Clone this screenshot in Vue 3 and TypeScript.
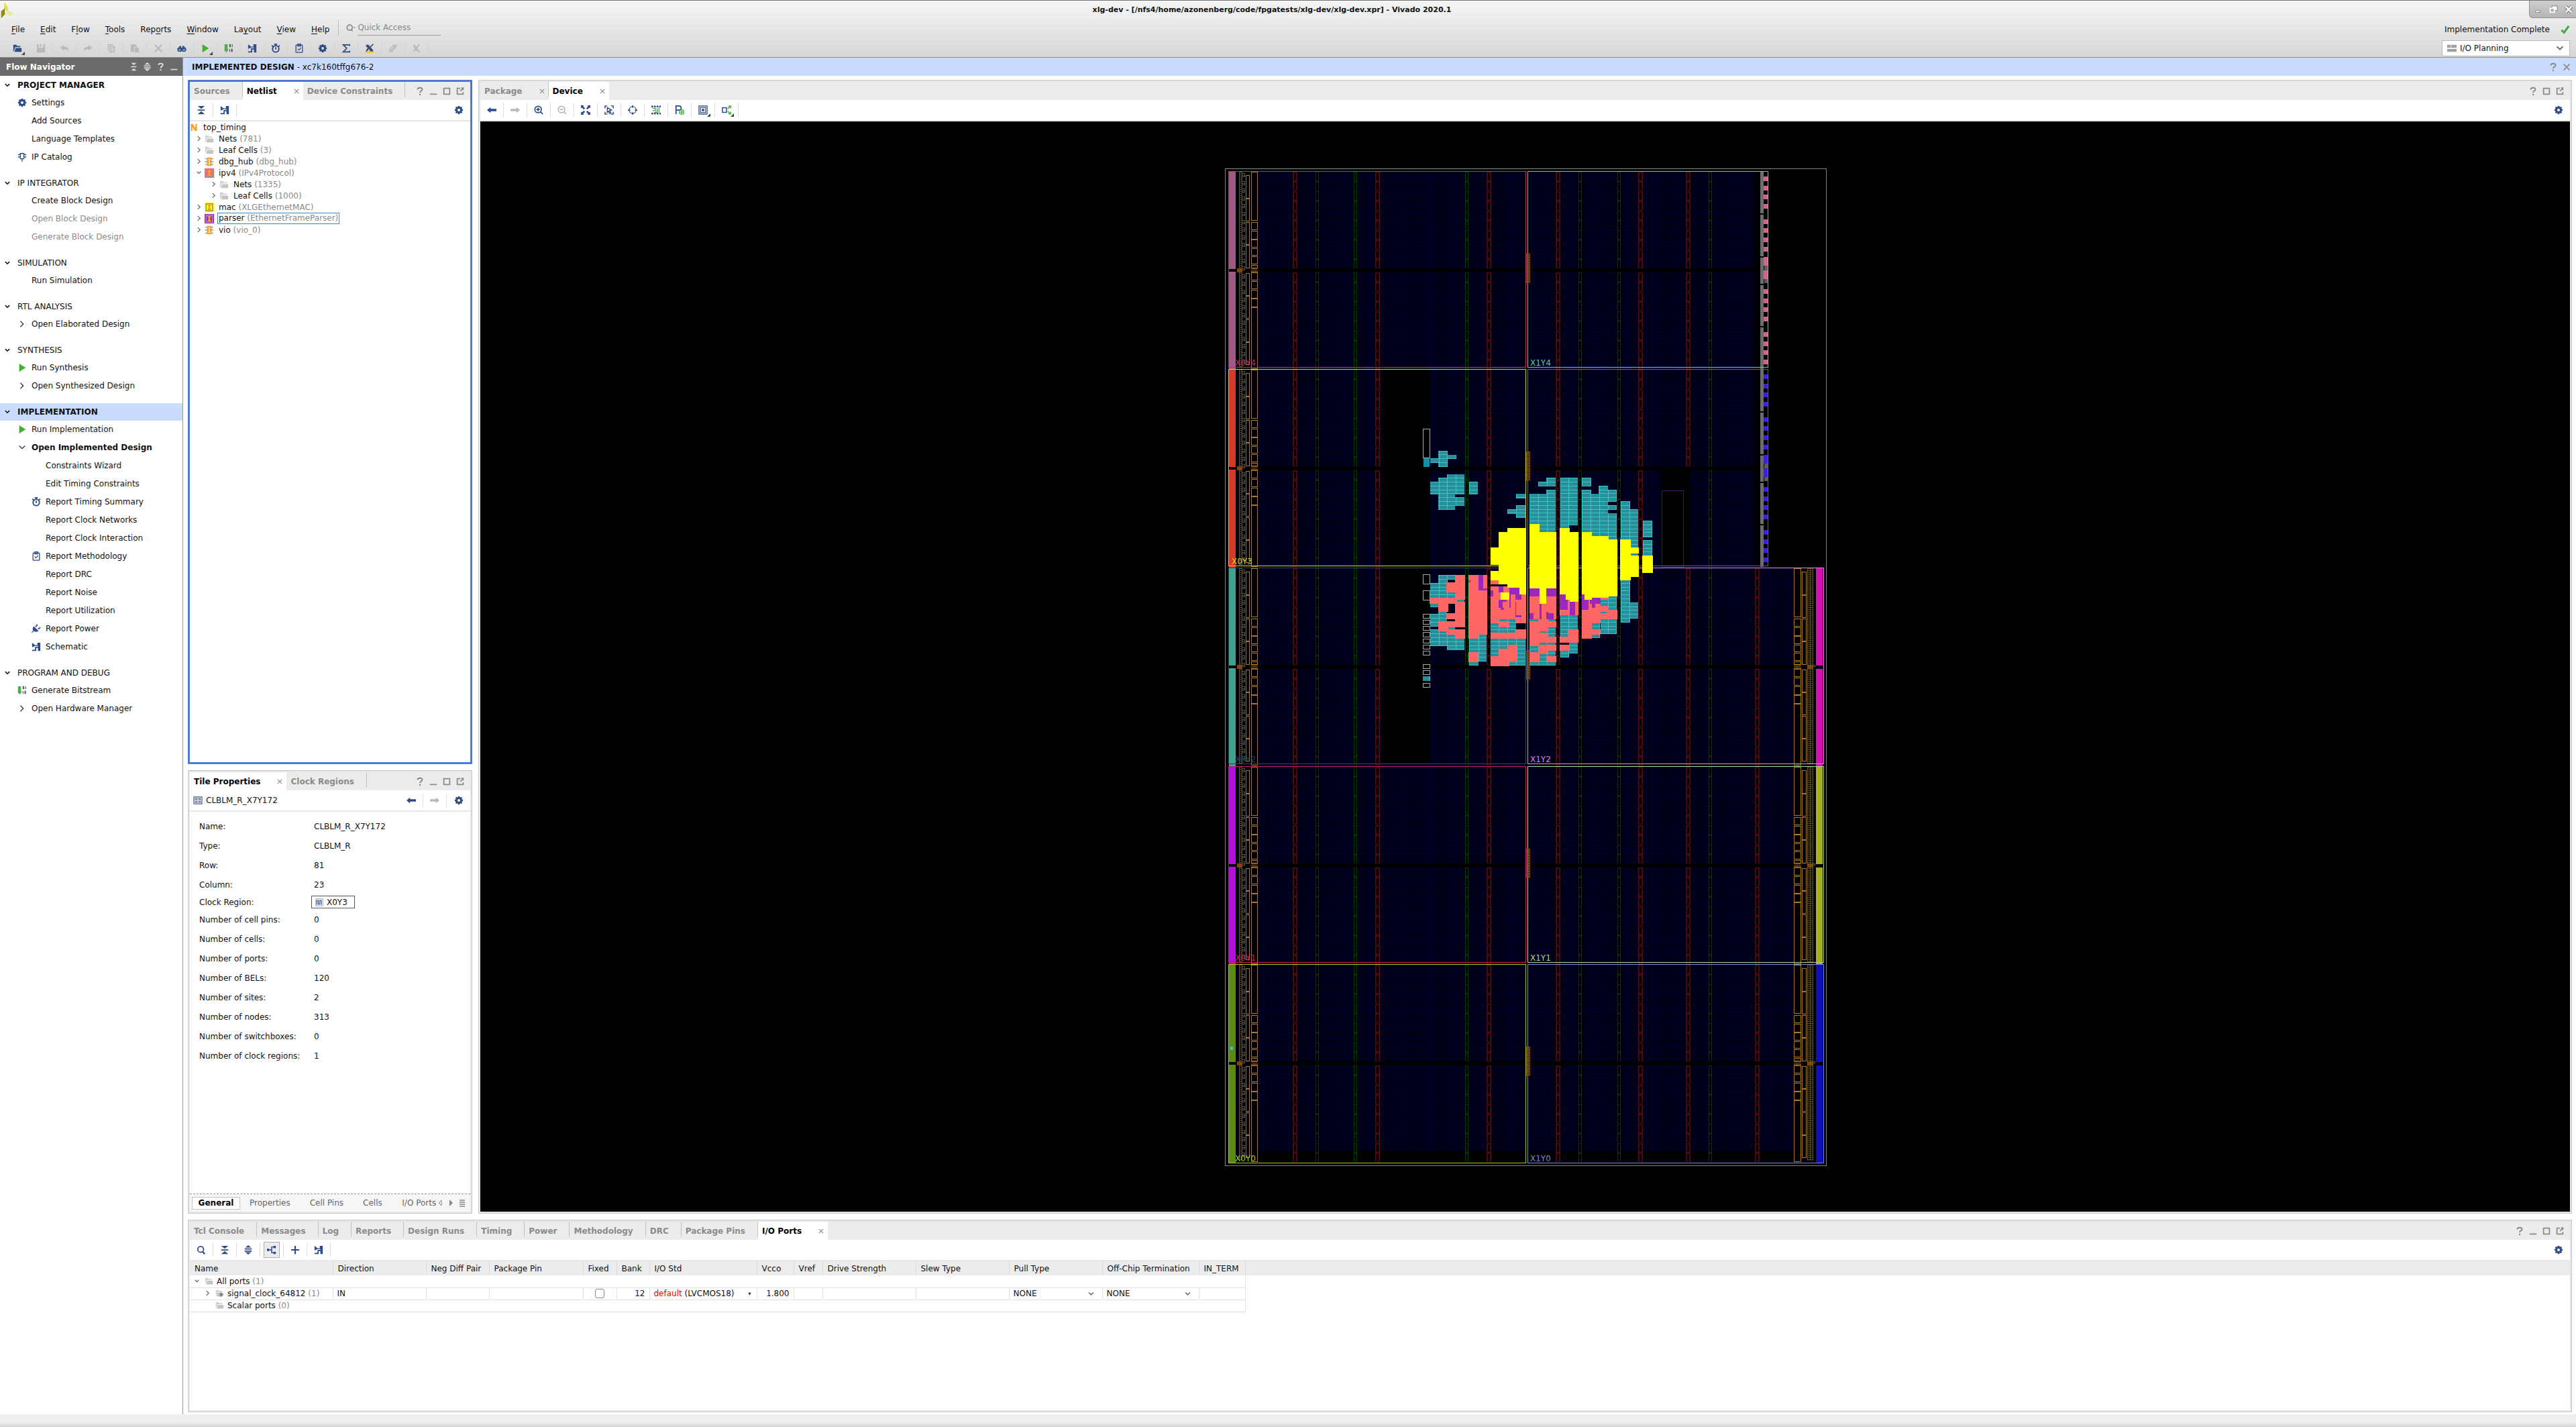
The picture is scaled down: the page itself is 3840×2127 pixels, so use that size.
<script setup lang="ts">
type Box = [number, number, number, number]

const navy = '#2f4b85'
const grey = '#b9b9b9'

const gear = `<g fill="none" stroke="${navy}"><circle cx="8" cy="8" r="4" stroke-width="3.4"/><path stroke-width="3" d="M8 1v3M8 12v3M1 8h3M12 8h3M3 3l2 2M11 11l2 2M3 13l2-2M11 5l2-2"/></g>`
const schematic = `<path fill="${navy}" d="M1 1l5 4h4V1h5v14h-4V10H8v5H1v-2h5V8h5V6.500H6L1 9z"/>`
const bits = (top: string, low: string) =>
  `<path fill="#45b04a" d="M1 1h5v9h2l-4.500 5L0 10h1z"/><g stroke="#555" stroke-width="1.200" fill="none"><path d="${top}"/><path d="${low}"/></g>`
const cell = (bg: string, frame: string) =>
  `<rect width="16" height="16" fill="${bg}"/><rect x="2.500" y="2" width="11" height="12" fill="none" stroke="${frame}" stroke-width="1.500"/><path fill="#f7a030" d="M5 3.500h6v2H9.500v5H11v2H5v-2h1.500v-5H5z"/>`
const hubCell = `<path stroke="#999" stroke-width="1.500" d="M1 3h14M1 8h14M1 13h14"/><rect x="4" y="1" width="8" height="14" fill="#f7a030"/><path stroke="#fff" stroke-width="1.300" d="M6.500 4h3M8 4v8M6.500 12h3"/>`

const icons: Record<string, string> = {
  open: `<path fill="${navy}" d="M1 2h5l1.500 2H13v2H4L2 13H1z"/><path fill="${navy}" d="M5 7.500h10V14H3z"/>`,
  save: `<path fill="${grey}" d="M1 1h3v6h8V1h3v14H1zM6 1h3v4H6z"/>`,
  undo: `<path fill="${grey}" d="M1 7l6-5v3c5 0 8 3 8 8-2-3-4-4-8-4v3z"/>`,
  redo: `<path fill="${grey}" d="M15 7L9 2v3c-5 0-8 3-8 8 2-3 4-4 8-4v3z"/>`,
  copy: `<path fill="${grey}" d="M2 1h9v1.500H3.500V12H2z"/><path fill="${grey}" d="M5 4h9v11H5z"/><path stroke="#eee" d="M6.500 7h6M6.500 9.500h6M6.500 12h6"/>`,
  paste: `<path fill="${grey}" d="M1 2h3V1h4v1h3v3H7v9H1z"/><path fill="${grey}" d="M8 6h4l3 3v6H8z"/>`,
  cut: `<path stroke="${grey}" stroke-width="2.200" d="M2 2l12 12M14 2L2 14"/>`,
  find: `<g fill="none" stroke="${navy}" stroke-width="2.200"><circle cx="4.500" cy="10" r="3"/><circle cx="11.500" cy="10" r="3"/></g><path fill="${navy}" d="M4 4h3v6H3zM9 4h3l1 6H9z"/>`,
  run: `<path fill="#3fb32d" d="M3 1l11 7L3 15z"/>`,
  bits: bits('M9.500 1.500h1.500v4H9.500zM14 1v5', 'M9.500 9v5M12.500 9.500H14v4h-1.500z'),
  schematic,
  timer: `<circle cx="8" cy="9" r="5.400" fill="none" stroke="${navy}" stroke-width="2.200"/><path stroke="${navy}" stroke-width="2" d="M5.500 1h5M8 1v3M8 6v4M1 3l3 2M15 3l-3 2"/>`,
  clipboard: `<rect x="2.500" y="2.500" width="11" height="12.500" rx="1" fill="none" stroke="${navy}" stroke-width="1.500"/><path fill="none" stroke="${navy}" stroke-width="1.500" d="M5.500 2V.800h5V4h-5zM5.500 9l2 2 3.500-4"/>`,
  gear,
  sigma: `<path fill="none" stroke="${navy}" stroke-width="2" d="M14 4V2H3l6 6-6 6h11v-2"/>`,
  mark: `<path fill="#f4c20d" d="M1 13h14v2.500H1z"/><path fill="${navy}" d="M2 2h4l8 9v2H9L7 9l-4 4V9l2-2-3-2z"/><path stroke="#555" stroke-width="2" d="M2 13L14 1"/>`,
  unmark: `<path stroke="${grey}" stroke-width="1.500" fill="none" d="M2 10l7-8 4 3-7 9zM1 14L15 2M4 12l7-8"/>`,
  clearmark: `<path stroke="${grey}" stroke-width="2" d="M3 2l10 13M13 1L2 14"/><path fill="${grey}" d="M2 3h4l4 7-3 3z"/>`,
  chip: `<path fill="none" stroke="${navy}" stroke-width="1.500" d="M5 2h6v9H5zM1 4h4M1 8h4M11 4h4M11 8h4M8 11v5"/>`,
  plug: `<path fill="${navy}" d="M4 4l8 8c-3 2-6 2-8 0l-3 3-1-1 3-3C1 9 2 6 4 4z"/><path stroke="${navy}" stroke-width="2" d="M7 5l3-4M11 9l4-3"/>`,
  open2: `<path fill="none" stroke="#222" stroke-width="1.400" d="M5 3l5 5-5 5"/>`,
  shut2: `<path fill="none" stroke="#222" stroke-width="1.400" d="M3 5l5 5 5-5"/>`,
  collapse: `<path fill="${navy}" d="M2 1h12L8 6zM2 7h12v2H2zM8 10l6 5H2z"/>`,
  expand: `<path fill="${navy}" d="M8 0l5 4H3zM2 5.500h12v2H2zM2 9h12v2H2zM3 12h10l-5 4z"/>`,
  collapseW: `<path fill="#ddd" d="M3 1h10L8 5zM3 7h10v2H3zM8 11l5 4H3z"/>`,
  expandW: `<path fill="#ddd" d="M8 0l5 4H3zM2 5.500h12v2H2zM2 9h12v2H2zM3 12h10l-5 4z"/>`,
  back: `<path fill="${navy}" d="M0 8l6-5v3h10v4H6v3z"/>`,
  forward: `<path fill="${grey}" d="M16 8l-6-5v3H0v4h10v3z"/>`,
  zoomin: `<circle cx="7" cy="7" r="5.500" fill="none" stroke="${navy}" stroke-width="2"/><path stroke="${navy}" stroke-width="2" d="M4 7h6M7 4v6M11 11l4 4"/>`,
  zoomout: `<circle cx="7" cy="7" r="5.500" fill="none" stroke="${grey}" stroke-width="2"/><path stroke="${grey}" stroke-width="2" d="M4 7h6M11 11l4 4"/>`,
  fit: `<path fill="${navy}" d="M0 0h5L3.800 1.500 7 5 5 7 1.500 3.800 0 5zM16 0v5l-1.500-1.200L11 7 9 5l3.200-3.500L11 0zM0 16v-5l1.500 1.200L5 9l2 2-3.200 3.500L5 16zM16 16h-5l1.200-1.500L9 11l2-2 3.500 3.200L16 11z"/>`,
  select: `<path fill="none" stroke="${navy}" stroke-width="1.700" d="M1 5V1h4M11 1h4v4M15 11v4h-4M5 15H1v-4M5 4l7 4-3 1 2 4-2 1-2-4-2 2z"/>`,
  target: `<circle cx="8" cy="8" r="6" fill="none" stroke="${navy}" stroke-width="1.300"/><path stroke="${navy}" stroke-width="2" d="M8 0v4M8 12v4M0 8h4M12 8h4"/>`,
  routes: `<path stroke="${navy}" stroke-width="3" stroke-dasharray="3 1.500" d="M0 2h16M0 14h16"/><path fill="none" stroke="#3aa845" stroke-width="1.500" d="M2 5h5v4H2M5 12h5V5M13 4v8"/>`,
  place: `<path fill="none" stroke="${navy}" stroke-width="2" d="M2 15V1h5c5 0 5 7 0 7H2"/><circle cx="11.500" cy="11.500" r="3.800" fill="#fff" stroke="#3fae49" stroke-width="1.600"/><path stroke="#3fae49" stroke-width="1.500" d="M9 11.500h5M11.500 9v5"/>`,
  frame: `<path fill="none" stroke="${navy}" stroke-width="1.400" d="M1 1h14v14H1zM3.500 3.500h9v9h-9z"/><path fill="${navy}" d="M6 6h4v4H6z"/>`,
  spread: `<path fill="none" stroke="${navy}" stroke-width="1.700" d="M1 4h7v8H1z"/><path fill="none" stroke="#3fae49" stroke-width="1.700" d="M10 6l4-4M11 1.500h4v4M10 10l4 4M11 14.500h4v-4"/>`,
  search: `<circle cx="7" cy="7" r="5" fill="none" stroke="${navy}" stroke-width="2"/><path stroke="${navy}" stroke-width="2.500" d="M10 11l4 4"/>`,
  tree: `<path fill="none" stroke="${navy}" stroke-width="1.700" d="M4 8h4M13 3H8v10h5"/><path fill="${navy}" d="M0 6h4v4H0zM11 1h4v4h-4zM11 11h4v4h-4z"/>`,
  plus: `<path stroke="${navy}" stroke-width="2.500" d="M8 1v14M1 8h14"/>`,
  netlist: `<path fill="#f7a030" d="M2 1h4l5 8V1h3v14h-4L5 7v8H2z"/>`,
  folder: `<path fill="#d2d2d2" d="M1 2h5l1.500 2H13v2H4L2 13H1z"/><path fill="#c4c4c4" d="M4.500 7.500H15V14H3z"/>`,
  portFolder: `<path fill="#d2d2d2" d="M1 2h5l1.500 2H13v2H4L2 13H1z"/><path fill="#c4c4c4" d="M3 7.500h8V14H3z"/><path fill="#888" d="M8 7h4l3 3.500L12 14H8z"/>`,
  hubCell,
  cellRed: cell('#ff6666', '#999'),
  cellYellow: cell('#ffff00', '#8c8c60'),
  cellPurple: cell('#9b28b8', '#c090c8'),
  tile: `<rect x="1" y="2" width="14" height="12" fill="#c8d0e0" stroke="${navy}"/><path fill="#888" d="M3 4h4v3H3zM9 4h4v3H9zM3 9h4v3H3zM9 9h4v3H9z"/>`,
  wave: `<rect x="1" y="1" width="14" height="14" fill="none" stroke="#888"/><path fill="none" stroke="${navy}" stroke-width="1.600" d="M3 13V4h3v8h3V4h3v9"/>`,
  help: `<path fill="none" stroke="currentColor" stroke-width="2.200" d="M4 5c0-4 8-4 8 0 0 2.500-4 2-4 5.500"/><path fill="currentColor" d="M6.800 12.500h2.500V15H6.800z"/>`,
  min: `<path fill="currentColor" d="M2 12h12v2H2z"/>`,
  max: `<path fill="none" stroke="currentColor" stroke-width="2" d="M3 3h10v10H3z"/>`,
  pop: `<path fill="none" stroke="currentColor" stroke-width="2" d="M8 3H3v10h10V9M8 8l5-5M10 2.500h4M13 2v4"/>`,
  close: `<path stroke="currentColor" stroke-width="1.800" d="M3 3l10 10M13 3L3 13"/>`,
  down: `<path fill="none" stroke="#666" stroke-width="2.200" d="M3 5l5 5 5-5"/>`,
  right: `<path fill="none" stroke="#666" stroke-width="2.200" d="M5 2l6 6-6 6"/>`,
  layout: `<path fill="#a0a0a0" d="M0 2h6v5H0zM7 2h9v5H7zM0 9h16v5H0z"/>`,
  check: `<path fill="none" stroke="#3fae49" stroke-width="3.500" d="M1.500 9l4.500 4L14 2"/>`,
}

const menus = [
  ['', 'F', 'ile'], ['', 'E', 'dit'], ['F', 'l', 'ow'], ['', 'T', 'ools'], ['Rep', 'o', 'rts'],
  ['', 'W', 'indow'], ['La', 'y', 'out'], ['', 'V', 'iew'], ['', 'H', 'elp'],
]
const mainTools = ['open', 'save', 'undo', 'redo', 'copy', 'paste', 'cut', 'find', 'run', 'bits', 'schematic', 'timer', 'clipboard', 'gear', 'sigma', 'mark', 'unmark', 'clearmark']
const deviceTools = ['back', 'forward', 'zoomin', 'zoomout', 'fit', 'select', 'target', 'routes', 'place', 'frame', 'spread']
const portTools = ['search', 'collapse', 'expand', 'tree', 'plus', 'schematic']
const withMenu = ['open', 'run', 'frame', 'spread']

interface NavItem { t: string; icon?: string; off?: boolean; sub?: boolean; bold?: boolean }
interface NavGroup { title: string; bold?: boolean; active?: boolean; items: NavItem[] }
const nav: NavGroup[] = [
  { title: 'PROJECT MANAGER', bold: true, items: [{ t: 'Settings', icon: 'gear' }, { t: 'Add Sources' }, { t: 'Language Templates' }, { t: 'IP Catalog', icon: 'chip' }] },
  { title: 'IP INTEGRATOR', items: [{ t: 'Create Block Design' }, { t: 'Open Block Design', off: true }, { t: 'Generate Block Design', off: true }] },
  { title: 'SIMULATION', items: [{ t: 'Run Simulation' }] },
  { title: 'RTL ANALYSIS', items: [{ t: 'Open Elaborated Design', icon: 'open2' }] },
  { title: 'SYNTHESIS', items: [{ t: 'Run Synthesis', icon: 'run' }, { t: 'Open Synthesized Design', icon: 'open2' }] },
  {
    title: 'IMPLEMENTATION', bold: true, active: true, items: [
      { t: 'Run Implementation', icon: 'run' },
      { t: 'Open Implemented Design', icon: 'shut2', bold: true },
      { t: 'Constraints Wizard', sub: true },
      { t: 'Edit Timing Constraints', sub: true },
      { t: 'Report Timing Summary', sub: true, icon: 'timer' },
      { t: 'Report Clock Networks', sub: true },
      { t: 'Report Clock Interaction', sub: true },
      { t: 'Report Methodology', sub: true, icon: 'clipboard' },
      { t: 'Report DRC', sub: true },
      { t: 'Report Noise', sub: true },
      { t: 'Report Utilization', sub: true },
      { t: 'Report Power', sub: true, icon: 'plug' },
      { t: 'Schematic', sub: true, icon: 'schematic' },
    ],
  },
  { title: 'PROGRAM AND DEBUG', items: [{ t: 'Generate Bitstream', icon: 'bits' }, { t: 'Open Hardware Manager', icon: 'open2' }] },
]

const netlist = [
  { t: 'Nets', n: '(781)', icon: 'folder', arrow: 'right', depth: 1 },
  { t: 'Leaf Cells', n: '(3)', icon: 'folder', arrow: 'right', depth: 1 },
  { t: 'dbg_hub', n: '(dbg_hub)', icon: 'hubCell', arrow: 'right', depth: 1 },
  { t: 'ipv4', n: '(IPv4Protocol)', icon: 'cellRed', arrow: 'down', depth: 1 },
  { t: 'Nets', n: '(1335)', icon: 'folder', arrow: 'right', depth: 2 },
  { t: 'Leaf Cells', n: '(1000)', icon: 'folder', arrow: 'right', depth: 2 },
  { t: 'mac', n: '(XLGEthernetMAC)', icon: 'cellYellow', arrow: 'right', depth: 1 },
  { t: 'parser', n: '(EthernetFrameParser)', icon: 'cellPurple', arrow: 'right', depth: 1, focus: true },
  { t: 'vio', n: '(vio_0)', icon: 'hubCell', arrow: 'right', depth: 1 },
]

const props: [string, string][] = [
  ['Name:', 'CLBLM_R_X7Y172'], ['Type:', 'CLBLM_R'], ['Row:', '81'], ['Column:', '23'], ['Clock Region:', 'X0Y3'],
  ['Number of cell pins:', '0'], ['Number of cells:', '0'], ['Number of ports:', '0'], ['Number of BELs:', '120'],
  ['Number of sites:', '2'], ['Number of nodes:', '313'], ['Number of switchboxes:', '0'], ['Number of clock regions:', '1'],
]
const bottomTabs = ['Tcl Console', 'Messages', 'Log', 'Reports', 'Design Runs', 'Timing', 'Power', 'Methodology', 'DRC', 'Package Pins']
const columns: [string, number][] = [
  ['Name', 213], ['Direction', 139], ['Neg Diff Pair', 94], ['Package Pin', 140], ['Fixed', 50], ['Bank', 49], ['I/O Std', 160],
  ['Vcco', 55], ['Vref', 43], ['Drive Strength', 139], ['Slew Type', 139], ['Pull Type', 139], ['Off-Chip Termination', 144], ['IN_TERM', 69],
]

/* Device floorplan: five clock-region rows, top (Y4) to bottom (Y0) */
const rows = [
  { y: 4, o: 0, left: '#a05a86', right: '', a: '#c42a5c', b: '#68c8a8', end: 2634, h: 292 },
  { y: 3, o: 295, left: '#d33a28', right: '', a: '#d8d020', b: '#5a58d0', end: 2634, h: 293 },
  { y: 2, o: 591, left: '#3ea38f', right: '#d80fb0', a: '#164a66', b: '#d884e0', end: 2717, h: 292 },
  { y: 1, o: 887, left: '#b010d8', right: '#a8b020', a: '#d0145c', b: '#a8d890', end: 2717, h: 292 },
  { y: 0, o: 1182, left: '#5a8a14', right: '#1010b8', a: '#a0c820', b: '#7888d8', end: 2717, h: 296 },
]
const redCols = [1926, 2049, 2215, 2318, 2441, 2512]
const greenCols = [1960, 2017, 2183, 2352, 2410, 2546]
const halves = [256, 406]
const cellSteps = [0, 29, 58, 87, 116]
const narrowSites: [number, number][] = [[261, 35], [296, 34], [331, 34], [365, 35], [407, 34], [441, 34], [476, 34], [510, 34]]
const wideSites: [number, number][] = [[256, 73], [331, 12], [344, 13], [357, 12], [370, 11], [382, 12], [395, 5], [406, 12], [419, 12], [432, 13], [445, 13], [458, 92]]
const pads = Array.from({ length: 25 }, (_, i) => 258 + Math.round(i * 11.6))
const gtPads = [263, 277, 290, 304, 327, 340, 354, 368, 431, 445, 458, 472, 495, 509, 522, 536]
const gtGrey: [number, number][] = [[256, 62], [320, 62], [384, 39], [425, 61], [488, 62]]
const fabricHeight = (y: number, i: number) => (i === 0 ? 144 : y === 0 ? 128 : 145)
const redFor = (y: number) => (y < 3 ? [...redCols, 2615] : redCols)
const redShown = (x: number, y: number, i: number) => !(x === 2512 && y === 3 && i === 1)

/* Placed cells, corner to corner, on a grid three times finer than the floorplan */
const teal: Box[] = [
  [189, 156, 231, 228], [153, 190, 189, 210], [231, 174, 269, 192],
  [228, 261, 306, 278], [189, 276, 306, 350], [153, 294, 189, 350], [189, 350, 264, 419], [264, 364, 306, 401], [327, 294, 366, 350],
  [537, 348, 579, 368], [537, 399, 579, 455], [498, 417, 537, 437], [636, 294, 714, 314], [672, 276, 714, 294], [672, 330, 714, 348],
  [597, 348, 714, 520], [735, 276, 813, 488], [735, 488, 774, 502], [831, 276, 873, 314], [831, 330, 873, 520], [870, 348, 909, 540],
  [906, 312, 948, 540], [948, 330, 987, 383], [948, 399, 987, 419], [948, 435, 987, 552], [1005, 381, 1047, 552], [1047, 417, 1083, 588],
  [1050, 614, 1083, 624], [1104, 468, 1146, 543], [1104, 555, 1146, 624], [1005, 735, 1047, 924], [1047, 834, 1083, 906],
  [189, 711, 231, 747], [231, 711, 264, 732], [153, 747, 228, 813], [228, 788, 264, 813], [270, 820, 306, 833], [153, 840, 189, 854],
  [153, 885, 189, 942], [189, 876, 228, 918], [234, 944, 264, 954], [153, 954, 228, 1029], [228, 975, 306, 1047], [327, 990, 369, 1116],
  [369, 978, 405, 1098], [423, 926, 459, 968], [459, 908, 537, 968], [423, 996, 579, 1074], [507, 1074, 579, 1116], [597, 908, 636, 918],
  [642, 944, 714, 988], [681, 908, 714, 918], [597, 1030, 636, 1056], [636, 1014, 714, 1022], [636, 1050, 714, 1116], [597, 1100, 636, 1116],
  [735, 891, 813, 988], [735, 1048, 774, 1080], [774, 1014, 813, 1062], [915, 806, 987, 975], [876, 926, 912, 992], [121, 1165, 150, 1184],
]
const coral: Box[] = [
  [264, 711, 309, 822], [225, 744, 264, 788], [150, 813, 273, 840], [264, 831, 309, 908], [189, 840, 234, 876], [225, 882, 264, 908],
  [189, 918, 309, 944], [264, 908, 309, 918], [189, 944, 234, 963], [225, 954, 309, 978], [264, 978, 309, 996],
  [324, 711, 408, 978], [324, 978, 369, 996], [324, 1056, 369, 1101],
  [423, 735, 465, 753], [423, 762, 582, 908], [423, 908, 459, 926], [534, 908, 582, 926], [459, 918, 507, 944], [534, 954, 582, 970],
  [423, 969, 582, 996], [498, 1022, 543, 1050], [459, 1041, 543, 1074], [423, 1074, 507, 1119], [507, 1050, 543, 1101],
  [597, 804, 717, 908], [597, 918, 717, 944], [636, 908, 681, 918], [597, 944, 681, 962], [597, 962, 642, 1030], [642, 968, 681, 988],
  [642, 988, 717, 1014], [636, 1022, 717, 1050], [636, 1050, 681, 1065], [597, 1056, 642, 1101], [672, 1074, 717, 1101],
  [732, 820, 816, 891], [768, 954, 816, 988], [732, 987, 816, 1014], [732, 1022, 777, 1050],
  [831, 797, 915, 868], [915, 806, 951, 822], [906, 849, 951, 868], [831, 868, 990, 909], [831, 909, 915, 926], [831, 926, 876, 996], [876, 954, 915, 978],
]
const purple: Box[] = [
  [369, 711, 390, 780], [384, 770, 408, 780], [324, 735, 333, 744], [423, 780, 435, 808], [459, 762, 480, 790], [507, 762, 552, 798],
  [534, 798, 561, 822], [507, 798, 513, 858], [459, 822, 477, 858], [477, 822, 495, 831], [468, 858, 483, 867], [534, 831, 537, 900], [537, 890, 561, 900],
  [597, 771, 642, 807], [672, 771, 717, 807], [642, 840, 652, 908], [597, 882, 615, 908], [672, 876, 681, 908], [681, 882, 705, 908],
  [732, 798, 768, 866], [777, 831, 801, 891], [831, 797, 843, 822], [831, 822, 861, 866], [867, 813, 915, 840], [876, 840, 891, 858],
]
const yellow: Box[] = [
  [423, 588, 459, 666], [423, 693, 459, 735], [459, 519, 582, 753], [498, 501, 582, 519], [498, 735, 582, 768], [552, 753, 582, 798],
  [468, 788, 507, 822], [597, 483, 642, 771], [642, 519, 717, 771], [642, 771, 672, 840], [732, 501, 777, 798], [777, 519, 816, 831],
  [759, 798, 777, 822], [831, 519, 876, 797], [843, 797, 876, 822], [876, 537, 951, 813], [951, 552, 990, 807], [1002, 552, 1050, 735],
  [1050, 588, 1086, 614], [1050, 624, 1086, 720], [1101, 624, 1149, 702],
]
const outlines: [number, number][] = [[57, 131], [709, 43], [781, 43], [886, 19], [913, 19], [940, 19], [967, 22], [997, 19], [1024, 19], [1051, 19], [1111, 19], [1138, 19], [1165, 19], [1195, 19]]
const columnLines = [192, 229, 268, 328, 370, 460, 499, 539, 598, 637, 677, 736, 772, 832, 871, 910, 948, 985, 1006, 1045, 1105, 1143]
const rowLines = Array.from({ length: 58 }, (_, i) => 156 + Math.round(i * 17.4))
const path = (list: Box[]) => list.map(([a, b, c, d]) => `M${a} ${b}H${c}V${d}H${a}z`).join('')
</script>

<template>
  <div class="app">
    <header class="top">
      <div class="titlebar">
        <svg class="logo" viewBox="0 0 22 30"><path fill="#e3e04e" d="M6 2l6 9v7L6 13z" /><path fill="#8c8c12" d="M1 17l6-5v10l-6 6z" /><path fill="#e8eb9a" d="M8 21l6-4 8 4-7 4z" /></svg>
        <h1>xlg-dev - [/nfs4/home/azonenberg/code/fpgatests/xlg-dev/xlg-dev.xpr] - Vivado 2020.1</h1>
        <div class="wm">
          <button aria-label="Minimize"><svg viewBox="0 0 16 16"><path fill="#fff" stroke="#777" d="M4 10h8v3H4z" /></svg></button>
          <button aria-label="Restore"><svg viewBox="0 0 16 16"><path fill="#fff" stroke="#777" d="M6 2h9v8H6z" /><path fill="#aaa" stroke="#fff" stroke-width="2" d="M3 6h7v7H3z" /></svg></button>
          <button aria-label="Close"><svg viewBox="0 0 16 16"><path stroke="#777" stroke-width="5" d="M3 3l10 10M13 3L3 13" /><path stroke="#fff" stroke-width="3" d="M3 3l10 10M13 3L3 13" /></svg></button>
        </div>
      </div>
      <div class="cmd">
        <div class="cmd-left">
          <div class="menubar">
            <button v-for="m in menus" :key="m.join('')" class="menu">{{ m[0] }}<u>{{ m[1] }}</u>{{ m[2] }}</button>
            <label class="quick">
              <svg viewBox="0 0 16 16"><circle cx="6" cy="7" r="4.500" fill="none" stroke="#888" stroke-width="2" /><path stroke="#888" stroke-width="2" d="M8 10l3 3" /><path fill="#888" d="M12 6h4l-2 2z" /></svg>
              <input type="text" placeholder="Quick Access" aria-label="Quick Access">
            </label>
          </div>
          <div class="tools main-tools">
            <button v-for="i in mainTools" :key="i" :aria-label="i" :class="{ drop: withMenu.includes(i) }"><svg viewBox="0 0 16 16" v-html="icons[i]" /></button>
          </div>
        </div>
        <div class="cmd-right">
          <div class="status">Implementation Complete<svg viewBox="0 0 16 16" v-html="icons.check" /></div>
          <div class="planner">
            <svg viewBox="0 0 16 16" v-html="icons.layout" />
            <select aria-label="Layout"><option>I/O Planning</option></select>
            <svg class="chev" viewBox="0 0 16 16" v-html="icons.down" />
          </div>
        </div>
      </div>
    </header>

    <div class="body">
      <nav class="nav">
        <div class="nav-head">
          <span>Flow Navigator</span>
          <svg viewBox="0 0 16 16" v-html="icons.collapseW" /><svg viewBox="0 0 16 16" v-html="icons.expandW" /><svg viewBox="0 0 16 16" v-html="icons.help" /><svg viewBox="0 0 16 16" v-html="icons.min" />
        </div>
        <section v-for="g in nav" :key="g.title" class="group">
          <h2 :class="{ bold: g.bold, active: g.active }"><svg viewBox="0 0 16 16"><path fill="none" stroke="#111" stroke-width="2.500" d="M3 5l5 5 5-5" /></svg>{{ g.title }}</h2>
          <a v-for="it in g.items" :key="it.t" href="#" :class="{ off: it.off, sub: it.sub, bold: it.bold }">
            <svg viewBox="0 0 16 16" v-html="it.icon ? icons[it.icon] : ''" />{{ it.t }}
          </a>
        </section>
      </nav>

      <main class="work">
        <div class="banner">
          <b>IMPLEMENTED DESIGN</b><span>&nbsp;- xc7k160tffg676-2</span>
          <div class="winops"><svg viewBox="0 0 16 16" v-html="icons.help" /><svg viewBox="0 0 16 16" v-html="icons.close" /></div>
        </div>
        <div class="panes">
          <div class="upper">
            <div class="side">
              <section class="panel focused netlist">
                <div class="tabs">
                  <button class="tab">Sources</button>
                  <button class="tab on">Netlist<svg viewBox="0 0 16 16" v-html="icons.close" /></button>
                  <button class="tab">Device Constraints</button>
                  <div class="winops"><svg v-for="i in ['help', 'min', 'max', 'pop']" :key="i" viewBox="0 0 16 16" v-html="icons[i]" /></div>
                </div>
                <div class="tools line">
                  <button aria-label="Collapse all"><svg viewBox="0 0 16 16" v-html="icons.collapse" /></button>
                  <button aria-label="Schematic"><svg viewBox="0 0 16 16" v-html="icons.schematic" /></button>
                  <button class="cog" aria-label="Settings"><svg viewBox="0 0 16 16" v-html="icons.gear" /></button>
                </div>
                <ul class="tree">
                  <li class="root"><svg viewBox="0 0 16 16" v-html="icons.netlist" /><span>top_timing</span></li>
                  <li v-for="(n, i) in netlist" :key="i" :class="{ deep: n.depth === 2 }">
                    <svg class="arrow" viewBox="0 0 16 16" v-html="icons[n.arrow]" /><svg viewBox="0 0 16 16" v-html="icons[n.icon]" />
                    <span :class="{ focus: n.focus }">{{ n.t }} <i>{{ n.n }}</i></span>
                  </li>
                </ul>
              </section>

              <section class="panel properties">
                <div class="tabs">
                  <button class="tab on">Tile Properties<svg viewBox="0 0 16 16" v-html="icons.close" /></button>
                  <button class="tab">Clock Regions</button>
                  <div class="winops"><svg v-for="i in ['help', 'min', 'max', 'pop']" :key="i" viewBox="0 0 16 16" v-html="icons[i]" /></div>
                </div>
                <div class="tools line">
                  <div class="object"><svg viewBox="0 0 16 16" v-html="icons.tile" />CLBLM_R_X7Y172</div>
                  <button aria-label="Back"><svg viewBox="0 0 16 16" v-html="icons.back" /></button>
                  <button aria-label="Forward"><svg viewBox="0 0 16 16" v-html="icons.forward" /></button>
                  <button class="last-tool" aria-label="Settings"><svg viewBox="0 0 16 16" v-html="icons.gear" /></button>
                </div>
                <dl>
                  <div v-for="p in props" :key="p[0]" :class="{ region: p[1] === 'X0Y3' }">
                    <dt>{{ p[0] }}</dt>
                    <dd v-if="p[1] !== 'X0Y3'">{{ p[1] }}</dd>
                    <dd v-else><button class="chip"><svg viewBox="0 0 16 16" v-html="icons.wave" />X0Y3</button></dd>
                  </div>
                </dl>
                <div class="subtabs">
                  <button class="on">General</button><button>Properties</button><button>Cell Pins</button><button>Cells</button><button class="cutoff">I/O Ports</button>
                  <svg class="pager" viewBox="0 0 44 16"><path fill="none" stroke="#888" d="M5 4v8L1 8z" /><path fill="#888" d="M17 3v10l5-5z" /><path stroke="#888" stroke-width="1.500" d="M32 4h8M32 7h8M32 10h8M32 13h8" /></svg>
                </div>
              </section>
            </div>

            <section class="panel device">
              <div class="tabs">
                <button class="tab closable">Package<svg viewBox="0 0 16 16" v-html="icons.close" /></button>
                <button class="tab on">Device<svg viewBox="0 0 16 16" v-html="icons.close" /></button>
                <div class="winops"><svg v-for="i in ['help', 'max', 'pop']" :key="i" viewBox="0 0 16 16" v-html="icons[i]" /></div>
              </div>
              <div class="tools line">
                <button v-for="i in deviceTools" :key="i" :aria-label="i" :class="{ drop: withMenu.includes(i) }"><svg viewBox="0 0 16 16" v-html="icons[i]" /></button>
                <button class="cog" aria-label="Settings"><svg viewBox="0 0 16 16" v-html="icons.gear" /></button>
              </div>
              <div class="canvas">
                <svg class="die" viewBox="1823 248 900 1491" shape-rendering="crispEdges">
                  <defs>
                    <pattern id="fabric" x="1875" y="256" width="6.300" height="5.800" patternUnits="userSpaceOnUse"><rect width="7" height="6" fill="#000014" /><path stroke="#000030" d="M0 .500h7M.500 0v6" /></pattern>
                    <pattern id="red" width="7" height="14.500" patternUnits="userSpaceOnUse"><rect width="7" height="15" fill="#480814" /><rect x="2" y="2" width="3" height="11" fill="#000" /></pattern>
                    <pattern id="green" width="5" height="14.500" patternUnits="userSpaceOnUse"><rect width="5" height="15" fill="#003c04" /><rect x="1" y="1" width="3" height="13" fill="#000" /></pattern>
                    <pattern id="ladder" width="5" height="2.900" patternUnits="userSpaceOnUse"><path fill="none" stroke="#5c5230" d="M0 .500h5M.500 0v3M4.500 0v3" /></pattern>
                    <pattern id="clk" width="6" height="4" patternUnits="userSpaceOnUse"><path fill="none" stroke="#7c480c" d="M.500 0v4M5.500 0v4M3 0v3M0 .500h6M0 2.500h6" /></pattern>
                    <clipPath id="placed"><path :d="path(teal)" /></clipPath>
                  </defs>
                  <rect x="1825.500" y="251.500" width="896" height="1486" fill="none" stroke="#808484" />

                  <g v-for="r in rows" :key="r.y" :transform="`translate(0 ${r.o})`">
                    <template v-for="(h, i) in halves" :key="h">
                      <rect x="1843" :y="h" width="1" height="144" fill="#00001c" />
                      <rect x="1875" :y="h" :width="r.y < 3 ? 798 : 740" :height="fabricHeight(r.y, i)" fill="url(#fabric)" />
                      <template v-for="x in redFor(r.y)" :key="x">
                        <g v-if="redShown(x, r.y, i)" :transform="`translate(${x} ${h})`">
                          <rect x="-1" width="9" height="144" fill="#000008" />
                          <rect v-for="s in cellSteps" :key="s" :y="s" width="7" height="28" fill="url(#red)" />
                        </g>
                      </template>
                      <g v-for="x in greenCols" :key="x" :transform="`translate(${x} ${h})`">
                        <rect x="-1" width="7" height="144" fill="#000008" />
                        <rect v-for="s in cellSteps" :key="s" :y="s" width="5" height="28" fill="url(#green)" />
                      </g>
                    </template>
                    <rect x="1831" y="256" width="10" height="145" :fill="r.left" />
                    <rect x="1831" y="405" width="10" height="146" :fill="r.left" />
                    <rect x="2270" y="256" width="8" height="294" fill="#00000c" />

                    <g transform="translate(1846 256)"><rect width="5" height="292" fill="url(#ladder)" /></g>
                    <path v-for="p in pads" :key="p" fill="none" stroke="#5c5230" :d="`M1851 ${p}.500h3.500v5h-3.500m0-2h3`" />
                    <rect v-for="(s, i) in narrowSites" :key="'n' + i" x="1856.500" :y="s[0] + 0.5" width="5" :height="s[1] - 1" fill="#000" stroke="#a87828" />
                    <rect v-for="(s, i) in wideSites" :key="'w' + i" x="1864.500" :y="s[0] + 0.5" width="9" :height="s[1] - 1" fill="#000" stroke="#a87828" />
                    <path fill="#7c480c" d="M1843 400h8v6h-8zM1864 400h10v1h-10zM1864 402h10v1h-10zM1864 404h10v2h-10z" />
                    <path fill="none" stroke="#7c480c" d="M1851 400.500h3.500v2h-3.500" />

                    <g v-if="r.right">
                      <rect x="2706" y="256" width="10" height="145" :fill="r.right" />
                      <rect x="2706" y="406" width="10" height="145" :fill="r.right" />
                      <g transform="translate(2693 256)"><rect width="5" height="292" fill="url(#ladder)" /></g>
                      <g transform="translate(2697 256)"><rect width="5" height="292" fill="url(#ladder)" /></g>
                      <rect v-for="(s, i) in narrowSites" :key="'n' + i" x="2685.500" :y="s[0] + 0.5" width="6" :height="s[1] - 1" fill="#000" stroke="#a87828" />
                      <rect v-for="(s, i) in wideSites" :key="'w' + i" x="2673.500" :y="s[0] + 0.5" width="10" :height="s[1] - 1" fill="#000" stroke="#a87828" />
                      <path fill="#7c480c" d="M2693 400h8v6h-8zM2673 400h11v1h-11zM2673 402h11v1h-11zM2673 404h11v2h-11z" />
                      <path fill="none" stroke="#7c480c" d="M2701 400.500h3.500v2h-3.500" />
                    </g>
                    <g v-else>
                      <rect v-for="s in gtGrey" :key="s[0]" x="2623" :y="s[0]" width="5" :height="s[1]" fill="#6c6c6c" />
                      <rect v-for="p in gtPads" :key="p" x="2628" :y="p" width="6" height="7" :fill="r.y === 4 ? '#d86090' : '#3c1cee'" />
                      <path :fill="r.y === 4 ? '#d86090' : '#3c1cee'" d="M2628 383h6v13h-6zM2628 403h6v13h-6z" />
                      <path fill="#5c5c5c" d="M2629 396h5v7h-5zM2629 416h5v6h-5z" />
                    </g>
                  </g>

                  <path fill="#000" d="M2058 551h73v587h-73zM2474 696h44v149h-44z" />
                  <rect x="2476.500" y="731.500" width="32" height="114" fill="none" stroke="#45106c" />

                  <g v-for="r in rows" :key="r.y" :transform="`translate(0 ${r.o})`">
                    <rect x="1830.500" y="255.500" width="443" :height="r.h" fill="none" :stroke="r.a" />
                    <rect x="2276.500" y="255.500" :width="r.end - 2276" :height="r.h" fill="none" :stroke="r.b" />
                    <g transform="translate(2274 378)"><rect width="6" height="44" fill="url(#clk)" /></g>
                    <text :x="r.y === 3 ? 1835 : 1840" :y="r.h + 253" :fill="r.a">X0Y{{ r.y }}</text>
                    <text x="2280" :y="r.h + 253" :fill="r.b">X1Y{{ r.y }}</text>
                  </g>
                  <path fill="#30c8c0" d="M1833 1560h4v5h-4z" />

                  <svg class="cells" x="2080" y="620" width="460" height="430" viewBox="0 0 1380 1290">
                    <rect v-for="o in outlines" :key="o[0]" x="121" :y="o[0]" width="31" :height="o[1]" fill="none" stroke="#a8a8a8" stroke-width="3" />
                    <path fill="#1090aa" d="M123 189h27v39h-27z" />
                    <path fill="#288e98" :d="path(teal)" />
                    <g clip-path="url(#placed)" stroke="#38c4c8" stroke-width="3">
                      <line v-for="y in rowLines" :key="y" x1="120" x2="1150" :y1="y" :y2="y" />
                      <line v-for="x in columnLines" :key="x" :x1="x" :x2="x" y1="150" y2="1200" />
                    </g>
                    <path fill="#ff6666" :d="path(coral)" />
                    <path fill="#288e98" d="M915 876h27v6h-27z" />
                    <path fill="#9b28b8" :d="path(purple)" />
                    <path fill="#ffff00" :d="path(yellow)" />
                  </svg>
                </svg>
              </div>
            </section>
          </div>

          <section class="panel ports">
            <div class="tabs">
              <button v-for="t in bottomTabs" :key="t" class="tab">{{ t }}</button>
              <button class="tab on">I/O Ports<svg viewBox="0 0 16 16" v-html="icons.close" /></button>
              <div class="winops"><svg v-for="i in ['help', 'min', 'max', 'pop']" :key="i" viewBox="0 0 16 16" v-html="icons[i]" /></div>
            </div>
            <div class="tools line">
              <button v-for="i in portTools" :key="i" :aria-label="i" :class="{ pressed: i === 'tree' }"><svg viewBox="0 0 16 16" v-html="icons[i]" /></button>
              <button class="cog" aria-label="Settings"><svg viewBox="0 0 16 16" v-html="icons.gear" /></button>
            </div>
            <div class="grid-wrap">
              <table>
                <colgroup><col v-for="c in columns" :key="c[0]" :style="{ width: c[1] + 'px' }"></colgroup>
                <thead><tr><th v-for="c in columns" :key="c[0]">{{ c[0] }}</th></tr></thead>
                <tbody>
                  <tr>
                    <td colspan="14" class="tree-cell"><svg class="arrow" viewBox="0 0 16 16" v-html="icons.down" /><svg viewBox="0 0 16 16" v-html="icons.folder" />All ports <i>(1)</i></td>
                  </tr>
                  <tr>
                    <td class="tree-cell in"><svg class="arrow" viewBox="0 0 16 16" v-html="icons.right" /><svg viewBox="0 0 16 16" v-html="icons.portFolder" />signal_clock_64812 <i>(1)</i></td>
                    <td>IN</td><td /><td />
                    <td class="mid"><input type="checkbox" aria-label="Fixed"></td>
                    <td class="num">12</td>
                    <td><button class="std"><em>default</em> (LVCMOS18)<svg viewBox="0 0 16 16"><path fill="#333" d="M4 5h8l-4 7z" /></svg></button></td>
                    <td class="num">1.800</td><td /><td /><td />
                    <td><div class="pick"><select aria-label="Pull Type"><option>NONE</option></select><svg viewBox="0 0 16 16" v-html="icons.down" /></div></td>
                    <td><div class="pick"><select aria-label="Off-Chip Termination"><option>NONE</option></select><svg viewBox="0 0 16 16" v-html="icons.down" /></div></td>
                    <td />
                  </tr>
                  <tr>
                    <td colspan="14" class="tree-cell in leaf"><svg viewBox="0 0 16 16" v-html="icons.folder" />Scalar ports <i>(0)</i></td>
                  </tr>
                </tbody>
              </table>
            </div>
          </section>
        </div>
      </main>
    </div>
    <footer class="foot" />
  </div>
</template>

<style>
html, body { margin: 0; background: #fff; }
</style>

<style scoped>
* { box-sizing: border-box; }
.app { display: flex; flex-direction: column; min-height: 100vh; font: 12px/16px "DejaVu Sans", "Liberation Sans", sans-serif; color: #111; background: #fff; }
button, input, select { font: inherit; color: inherit; border: 0; margin: 0; padding: 0; background: none; border-radius: 0; outline: 0; }
svg { display: block; flex: none; width: 14px; height: 14px; }
a { color: inherit; text-decoration: none; }
i { font-style: normal; color: #8a8a8a; }

.top { border-top: 1px solid #777375; border-bottom: 1px solid #8f8f8f; background: linear-gradient(#f6f6f6, #d6d6d6); height: 86px; flex: none; }
.titlebar { display: flex; align-items: flex-start; height: 29px; }
.titlebar .logo { width: 22px; height: 28px; }
.titlebar h1 { flex: 1; margin: 0; padding-top: 6px; text-align: center; font-size: 11px; line-height: 16px; }
.wm { display: flex; align-items: center; justify-content: space-around; width: 70px; height: 26px; border: solid #8e8e8e; border-width: 0 0 1px 1px; border-radius: 0 0 0 6px; background: linear-gradient(#cfcfcf, #b4b4b4); }
.cmd { display: flex; justify-content: space-between; }
.menubar { display: flex; align-items: center; height: 28px; padding-left: 17px; }
.menu { margin-right: 23px; }
.menu u { text-underline-offset: 2px; }
.quick { display: flex; align-items: center; gap: 3px; height: 23px; margin: -5px 0 0 -10px; padding-left: 11px; border-left: 1px solid #bbb; }
.quick input { width: 124px; height: 22px; border-bottom: 1px solid #999; color: #888; }
.quick input::placeholder { color: #8a8a8a; opacity: 1; }
.tools { display: flex; align-items: center; height: 30px; }
.tools button { position: relative; display: flex; align-items: center; justify-content: center; width: 35px; height: 20px; border-right: 1px solid #dcdcdc; }
.main-tools { height: 28px; padding-left: 9px; }
.main-tools button { border-color: #d4d4d4; }
.drop::after { content: ""; position: absolute; right: 6px; bottom: 0; border: solid transparent; border-width: 0 0 5px 5px; border-bottom-color: #444; }
.cmd-right { width: 200px; padding-right: 9px; }
.status { display: flex; align-items: center; justify-content: space-between; height: 30px; padding: 0 0 2px 4px; white-space: nowrap; }
.planner { display: flex; align-items: center; gap: 5px; height: 24px; padding: 0 7px; border: 1px solid #bbb; background: #fff; }
.planner select { flex: 1; appearance: none; }

.body { display: flex; flex: 1; }
.nav { width: 273px; flex: none; border-right: 1px solid #999; }
.nav-head { display: flex; align-items: center; gap: 7px; height: 27px; padding: 0 6px 0 9px; margin-bottom: 1px; background: #6b6b6b; color: #fff; font-weight: bold; }
.nav-head span { flex: 1; }
.nav-head svg { width: 13px; height: 13px; color: #ddd; }
.group { margin-bottom: 13px; }
.group h2 { display: flex; align-items: center; gap: 10px; height: 26px; margin: 0 0 -1px; padding-left: 6px; font-size: 12px; font-weight: normal; }
.group h2 svg { width: 10px; height: 10px; }
.group a { display: flex; align-items: center; gap: 7px; height: 27px; padding-left: 26px; white-space: nowrap; }
.group a.sub { padding-left: 47px; }
.group a.off { color: #8a8a8a; }
.group .bold { font-weight: bold; }
.group .active { background: #cadcfe; }

.work { display: flex; flex-direction: column; flex: 1; min-width: 0; }
.banner { display: flex; align-items: center; height: 27px; padding: 0 7px 0 13px; background: #cadcfe; }
.winops { display: flex; align-items: center; gap: 6px; margin-left: auto; color: #8a8a8a; }
.panes { display: flex; flex-direction: column; flex: 1; gap: 9px; padding: 6px 6px 3px 7px; }
.upper { display: flex; flex: 1; gap: 9px; }
.side { display: flex; flex-direction: column; gap: 9px; width: 424px; }
.panel { display: flex; flex-direction: column; border: 1px solid #c9c9c9; box-shadow: inset 0 0 0 2px #e6e6e6; padding: 2px; }
.panel.focused { border: 3px solid #4a7cce; padding: 0; box-shadow: none; }
.netlist { height: 1020px; }
.properties { flex: 1; }
.device { flex: 1; min-width: 0; }
.ports { height: 287px; }
.tabs { display: flex; height: 27px; padding-right: 8px; background: #ececec; flex: none; }
.tab { display: flex; align-items: center; justify-content: space-between; padding: 0 19px 0 6px; color: #8a8a8a; font-weight: bold; white-space: nowrap; background: linear-gradient(#c4c4c4, #c4c4c4) right top / 1px 23px no-repeat; }
.tab svg { width: 10px; height: 10px; margin-left: 24px; color: #8a8a8a; }
.tab.on { padding-right: 5px; color: #000; background: #fff; }
.tab.closable { padding-right: 5px; }
.tools.line { height: 32px; flex: none; border-bottom: 2px solid #e6e6e6; }
.tools.line .cog { margin-left: auto; border: 0; }
.tools .last-tool { border: 0; }
.tools .pressed svg { width: 24px; height: 24px; padding: 4px; border: 1px solid #aaa; background: #ececec; }
.object { display: flex; align-items: center; gap: 5px; flex: 1; padding-left: 5px; }

.tree { margin: 0; padding: 0; list-style: none; }
.tree li { display: flex; align-items: center; height: 17px; padding-left: 9px; white-space: nowrap; }
.tree li.deep { padding-left: 31px; }
.tree li.root { padding-left: 0; gap: 6px; }
.tree li.root svg { width: 12px; }
.tree span { padding: 0 2px; }
.tree li:not(.root) span { margin-left: 5px; }
.tree .arrow { width: 9px; height: 9px; margin-right: 4px; }
.tree .focus { height: 17px; line-height: 15px; border: 1px solid #3b8fd0; padding: 0 1px; }

dl { flex: 1; margin: 0; padding: 7px 0 0 14px; }
dl div { display: flex; align-items: center; height: 29px; }
dl .region { height: 23px; }
dt { width: 171px; }
dd { margin: 0; }
.region dd { margin-left: -4px; }
.chip { display: flex; align-items: center; gap: 5px; width: 65px; height: 19px; padding-left: 5px; border: 1px solid #555; }
.chip svg { width: 12px; height: 12px; }
.subtabs { display: flex; align-items: center; height: 27px; padding-left: 3px; border-top: 1px dashed #999; background: #f6f6f6; color: #666; }
.subtabs button { height: 19px; padding: 0 15px 0 14px; white-space: nowrap; }
.subtabs .on { width: 72px; padding: 0; border: 1px solid #c4c4c4; background: #fff; color: #000; font-weight: bold; }
.subtabs .cutoff { width: 66px; padding-right: 0; overflow: hidden; }
.subtabs .pager { width: 44px; height: 16px; margin: 0 4px 0 auto; }

.canvas { display: flex; flex: 1; align-items: center; justify-content: center; background: #000; }
.die { width: 900px; height: 1491px; }
.die .cells { width: 460px; height: 430px; }
.die text { font: 12px "DejaVu Sans", sans-serif; }

.grid-wrap { background: linear-gradient(#ececec, #ececec) top / 100% 21px no-repeat; }
table { width: 1573px; table-layout: fixed; border-collapse: collapse; }
th { height: 21px; padding: 0 0 0 7px; text-align: left; font-weight: normal; border-right: 1px solid #dcdcdc; white-space: nowrap; }
td { height: 18px; padding: 0 6px; border: solid #e2e2e2; border-width: 0 1px 1px 0; line-height: 16px; white-space: nowrap; }
.tree-cell { padding-left: 6px; }
.tree-cell svg { display: inline-block; vertical-align: -2px; margin-right: 5px; width: 13px; height: 13px; }
.tree-cell .arrow { width: 9px; height: 9px; margin-right: 7px; vertical-align: 0; }
.tree-cell.in { padding-left: 22px; }
.tree-cell.leaf { padding-left: 38px; }
.num { text-align: right; }
.mid { text-align: center; }
td input { appearance: none; display: block; width: 14px; height: 14px; margin: 0 auto; border: 1px solid #888; border-radius: 3px; background: #fff; }
.std, .pick { display: flex; align-items: center; width: 100%; height: 16px; white-space: pre; }
.std svg { width: 9px; height: 9px; margin-left: auto; }
.std em { font-style: normal; color: #e00; }
.pick select { flex: 1; appearance: none; }
.pick svg { width: 11px; height: 11px; margin-right: 5px; }
.foot { height: 19px; flex: none; background: linear-gradient(#efefef 60%, #d4d4d4); }
</style>
